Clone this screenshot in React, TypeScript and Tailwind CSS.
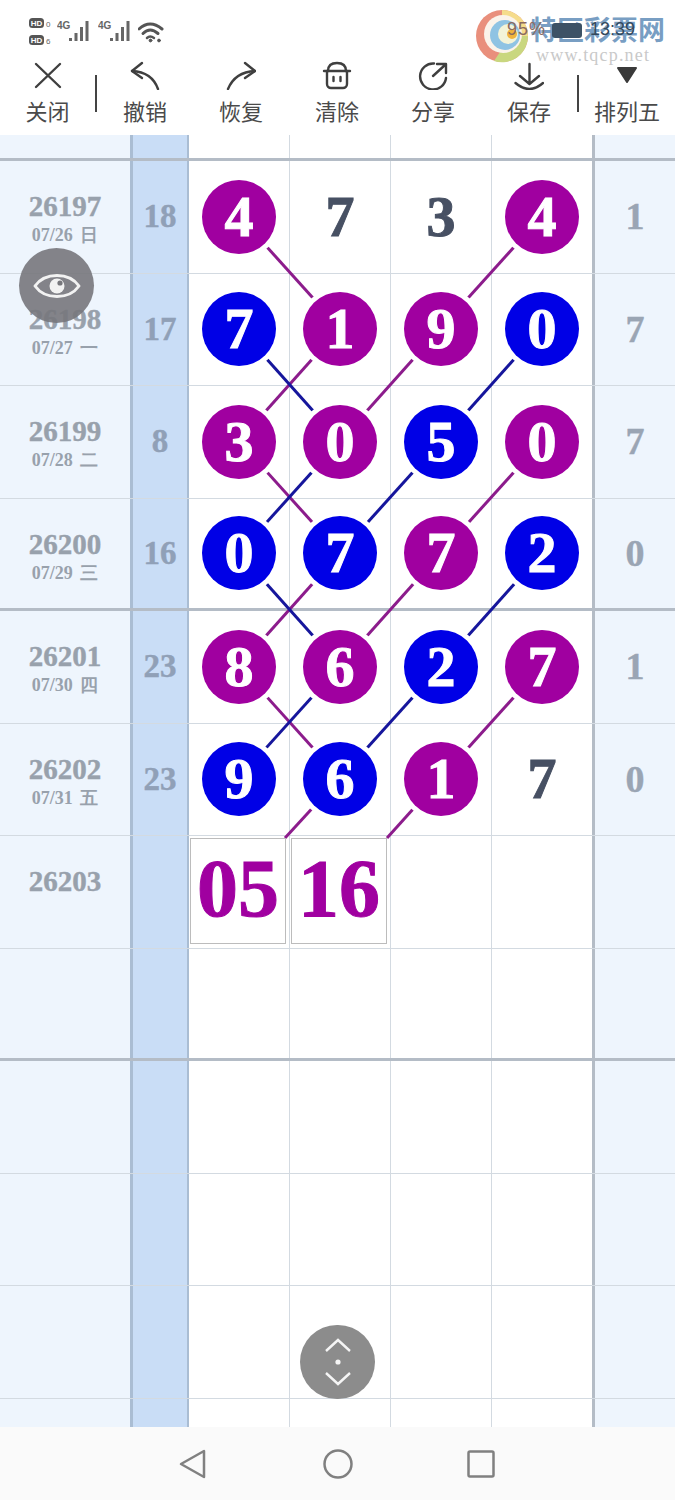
import React from "react";

type Cell = { v: string; k: "p" | "b" | "n" };

const p = (v: string): Cell => ({ v, k: "p" });
const b = (v: string): Cell => ({ v, k: "b" });
const n = (v: string): Cell => ({ v, k: "n" });

const rows = [
  { issue: "26197", date: "07/26 日", sum: "18", cells: [p("4"), n("7"), n("3"), p("4")], last: "1" },
  { issue: "26198", date: "07/27 一", sum: "17", cells: [b("7"), p("1"), p("9"), b("0")], last: "7" },
  { issue: "26199", date: "07/28 二", sum: "8", cells: [p("3"), p("0"), b("5"), p("0")], last: "7" },
  { issue: "26200", date: "07/29 三", sum: "16", cells: [b("0"), b("7"), p("7"), b("2")], last: "0", heavy: true },
  { issue: "26201", date: "07/30 四", sum: "23", cells: [p("8"), p("6"), b("2"), p("7")], last: "1" },
  { issue: "26202", date: "07/31 五", sum: "23", cells: [b("9"), b("6"), p("1"), n("7")], last: "0" },
];

const PURPLE = "#8c1c8c";
const BLUE = "#16169c";
const X = [239, 340, 441, 542];
const Y = [216, 328, 441, 553, 666, 778];

// [from row, from col, to row, to col, colour]
const links: [number, number, number, number, string][] = [
  [0, 0, 1, 1, PURPLE],
  [0, 3, 1, 2, PURPLE],
  [1, 1, 2, 0, PURPLE],
  [1, 2, 2, 1, PURPLE],
  [1, 0, 2, 1, BLUE],
  [1, 3, 2, 2, BLUE],
  [2, 0, 3, 1, PURPLE],
  [2, 3, 3, 2, PURPLE],
  [2, 1, 3, 0, BLUE],
  [2, 2, 3, 1, BLUE],
  [3, 1, 4, 0, PURPLE],
  [3, 2, 4, 1, PURPLE],
  [3, 0, 4, 1, BLUE],
  [3, 3, 4, 2, BLUE],
  [4, 0, 5, 1, PURPLE],
  [4, 3, 5, 2, PURPLE],
  [4, 1, 5, 0, BLUE],
  [4, 2, 5, 1, BLUE],
];

const serif = "font-['Liberation_Serif',serif] font-bold";
const gridCols = "grid grid-cols-[130px_59px_101px_101px_101px_100px_83px]";

const iconProps = {
  width: 30,
  height: 30,
  viewBox: "0 0 30 30",
  fill: "none",
  stroke: "#3f3f3f",
  strokeWidth: 2.4,
  strokeLinecap: "round" as const,
  strokeLinejoin: "round" as const,
};

const CloseIcon = () => (
  <svg {...iconProps}>
    <path d="M3 4 L27 27 M27 4 L3 27" />
  </svg>
);
const UndoIcon = () => (
  <svg {...iconProps}>
    <path d="M12 3 L2 11 L12 18" />
    <path d="M2 11 Q22 12 28 29" />
  </svg>
);
const RedoIcon = () => (
  <svg {...iconProps}>
    <path d="M19 3 L29 11 L19 18" />
    <path d="M29 11 Q9 12 2 29" />
  </svg>
);
const ClearIcon = () => (
  <svg {...iconProps}>
    <path d="M2 11 H28" />
    <path d="M6 11 C6 5 10 3 15 3 S24 5 24 11" />
    <path d="M5 11 V24 a4 4 0 0 0 4 4 H21 a4 4 0 0 0 4 -4 V11" />
    <path d="M11.5 17 V21 M18.5 17 V21" />
  </svg>
);
const ShareIcon = () => (
  <svg {...iconProps}>
    <path d="M16 3.5 A13 13 0 1 0 28 18" />
    <path d="M15 16 L27 5 M19 4 H28 V13" />
  </svg>
);
const SaveIcon = () => (
  <svg {...iconProps}>
    <path d="M15.5 4 V23 M6 16 L15.5 24 L25 16" />
    <path d="M1.5 23 Q15.5 35 29 23" />
  </svg>
);
const DropIcon = () => (
  <svg width={30} height={30} viewBox="0 0 30 30">
    <path d="M6 8 H24 L15 22 Z" fill="#3a3a3a" stroke="#3a3a3a" strokeWidth={2} strokeLinejoin="round" />
  </svg>
);

const Tool = ({ icon, label, width }: { icon: React.ReactNode; label: string; width: string }) => (
  <div className={`flex flex-col items-center ${width}`}>
    <div className="flex h-[40px] items-center justify-center">{icon}</div>
    <span className="text-[22px] leading-[30px] text-[#4a4a4a]">{label}</span>
  </div>
);

const HdChip = ({ y }: { y: number }) => (
  <g>
    <rect x={0} y={y} width={15} height={10} rx={3.5} fill="#555" />
    <text x={7.5} y={y + 8} fontSize={8} fontWeight={700} textAnchor="middle" fill="#fff" fontFamily="Liberation Sans">
      HD
    </text>
    <text x={17} y={y + 9} fontSize={8} fill="#666" fontFamily="Liberation Sans">
      {y === 0 ? "0" : "6"}
    </text>
  </g>
);

const Signal = ({ label }: { label: string }) => (
  <svg width={35} height={24} viewBox="0 0 35 24">
    <text x={0} y={11} fontSize={10} fontWeight={700} fill="#666" fontFamily="Liberation Sans">
      {label}
    </text>
    <rect x={12} y={20} width={3} height={3} fill="#666" />
    <rect x={17.5} y={15} width={3} height={8} fill="#666" />
    <rect x={23} y={9} width={3} height={14} fill="#666" />
    <rect x={28.5} y={3} width={3} height={20} fill="#666" />
  </svg>
);

const StatusBar = () => (
  <div className="flex h-[55px] items-start gap-[2px] pl-[29px] pt-[18px]">
    <svg width={26} height={28} viewBox="0 0 26 28">
      <HdChip y={0} />
      <HdChip y={17} />
    </svg>
    <Signal label="4G" />
    <div className="ml-[4px]">
      <Signal label="4G" />
    </div>
    <svg width={26} height={24} viewBox="0 0 26 24" fill="none" stroke="#555" strokeLinecap="round" className="ml-[3px] mt-[2px]">
      <path d="M1 9 Q12 -1 24 9" strokeWidth={3} />
      <path d="M5 13.5 Q12 6.5 20 13.5" strokeWidth={3} />
      <path d="M9 18 Q12 15 16 18" strokeWidth={2.5} />
      <circle cx={12.5} cy={20.5} r={1.4} fill="#555" />
      <circle cx={21} cy={20.5} r={1.4} fill="#555" />
    </svg>
  </div>
);

const Watermark = () => (
  <div className="absolute left-[474px] top-[8px] h-[56px] w-[201px]">
    <svg width={56} height={56} viewBox="0 0 56 56" className="absolute left-0 top-0">
      <circle cx={28} cy={28} r={26} fill="#e98f7c" />
      <path d="M28 2 A26 26 0 0 1 54 28 L42 28 A14 14 0 0 0 28 14 Z" fill="#f5dc8c" />
      <path d="M54 28 A26 26 0 0 1 20 53 L26 44 A16 16 0 0 0 44 28 Z" fill="#c9d77f" />
      <circle cx={29} cy={26} r={19} fill="#fbf3ea" />
      <circle cx={31} cy={27} r={15} fill="#8fc3e3" />
      <circle cx={34} cy={26} r={10} fill="#f3f3d8" />
      <circle cx={38} cy={26} r={5} fill="#f0b43c" />
    </svg>
    <span className="absolute left-[56px] top-[5px] whitespace-nowrap text-[27px] font-bold leading-[32px] text-[#5f8db8]/85">
      特区彩票网
    </span>
    <span className="absolute left-[62px] top-[37px] whitespace-nowrap text-[18px] font-['Liberation_Serif',serif] leading-[20px] tracking-[1.2px] text-[#c9c9c9]">
      www.tqcp.net
    </span>
    <span className="absolute left-[33px] top-[9px] text-[18px] leading-[24px] text-[#8a6a60] font-['Liberation_Sans',sans-serif] tracking-[1px]">
      95%
    </span>
    <div className="absolute left-[78px] top-[15px] h-[15px] w-[30px] rounded-[3px] bg-[#3d5266]" />
    <span className="absolute left-[116px] top-[9px] text-[18px] leading-[24px] text-[#35495c] font-['Liberation_Sans',sans-serif]">
      13:39
    </span>
  </div>
);

const Ball = ({ cell }: { cell: Cell }) => {
  if (cell.k === "n") {
    return (
      <span className={`${serif} relative z-10 text-[58px] leading-none text-[#475063] [-webkit-text-stroke:1px_#475063]`}>
        {cell.v}
      </span>
    );
  }
  return (
    <div
      className={`${serif} relative z-10 flex h-[74px] w-[74px] items-center justify-center rounded-full text-[58px] leading-none text-white [-webkit-text-stroke:1px_#ffffff] shadow-[0_0_0_5px_#ffffff] ${
        cell.k === "p" ? "bg-[#a000a0]" : "bg-[#0000e6]"
      }`}
    >
      {cell.v}
    </div>
  );
};

type RowProps = {
  issue?: string;
  date?: string;
  sum?: string;
  cells?: (React.ReactNode | null)[];
  last?: string;
  heavy?: boolean;
  height?: string;
};

const Row = ({ issue, date, sum, cells, last, heavy, height = "h-[112.5px]" }: RowProps) => {
  const line = heavy ? "border-b-[3px] border-b-[#b4bcc6]" : "border-b border-b-[#d3dae1]";
  return (
    <div className={`${gridCols} ${height} shrink-0 ${line}`}>
      <div className={`flex flex-col items-center bg-[#eef5fd] text-[#98a1ac] ${issue ? "pt-[30px]" : ""}`}>
        {issue && <span className={`${serif} text-[29px] leading-[30px] [-webkit-text-stroke:0.4px_#98a1ac]`}>{issue}</span>}
        {date && <span className={`${serif} text-[18px] leading-[28px] [word-spacing:3px]`}>{date}</span>}
      </div>
      <div className={`${serif} flex items-center justify-center border-x-[3px] border-r-[2px] border-x-[#aabdd3] bg-[#c9ddf6] text-[33px] text-[#90a0b7] [-webkit-text-stroke:0.4px_#90a0b7]`}>
        {sum}
      </div>
      {[0, 1, 2, 3].map((i) => (
        <div key={i} className={`flex items-center justify-center ${i < 3 ? "border-r border-r-[#d3dae1]" : ""}`}>
          {cells?.[i]}
        </div>
      ))}
      <div className={`${serif} flex items-center justify-center border-l-[3px] border-l-[#b4bcc6] bg-[#eef5fd] text-[38px] text-[#9aa5b4] [-webkit-text-stroke:0.4px_#9aa5b4]`}>
        {last}
      </div>
    </div>
  );
};

const Pending = ({ value }: { value: string }) => (
  <div className="relative z-10 mb-[4px] mr-[2px] flex h-[106px] w-[96px] items-center justify-center self-end border border-[#bcbcbc] bg-white pb-[3px]">
    <span className={`${serif} text-[82px] leading-none text-[#a000a0] [-webkit-text-stroke:1px_#a000a0]`}>{value}</span>
  </div>
);

const Table = () => (
  <div className="relative flex min-h-0 flex-1 flex-col overflow-hidden">
    <Row heavy height="h-[26px]" />
    {rows.map((r) => (
      <Row
        key={r.issue}
        issue={r.issue}
        date={r.date}
        sum={r.sum}
        last={r.last}
        heavy={r.heavy}
        cells={r.cells.map((c, i) => (
          <Ball key={i} cell={c} />
        ))}
      />
    ))}
    <Row issue="26203" cells={[<Pending key="a" value="05" />, <Pending key="b" value="16" />]} />
    <Row heavy />
    <Row />
    <Row />
    <Row />
    <Row />
    {/* connecting lines between the balls */}
    <svg className="pointer-events-none absolute inset-0 h-full w-full" viewBox="0 135 675 1292">
      {links.map(([r1, c1, r2, c2, color], i) => (
        <line key={i} x1={X[c1]} y1={Y[r1]} x2={X[c2]} y2={Y[r2]} stroke={color} strokeWidth={3} />
      ))}
      <line x1={340} y1={778} x2={285} y2={838} stroke={PURPLE} strokeWidth={3} />
      <line x1={441} y1={778} x2={387} y2={838} stroke={PURPLE} strokeWidth={3} />
    </svg>
  </div>
);

export default function App() {
  return (
    <div className="relative flex h-[1500px] w-[675px] flex-col overflow-hidden bg-white font-['Noto_Sans_CJK_SC','Noto_Sans',sans-serif]">
      <StatusBar />
      <div className="flex h-[80px] shrink-0 items-start">
        <Tool icon={<CloseIcon />} label="关闭" width="w-[95px]" />
        <div className="mt-[20px] h-[37px] w-[2px] bg-[#444]" />
        <Tool icon={<UndoIcon />} label="撤销" width="w-[96px]" />
        <Tool icon={<RedoIcon />} label="恢复" width="w-[96px]" />
        <Tool icon={<ClearIcon />} label="清除" width="w-[96px]" />
        <Tool icon={<ShareIcon />} label="分享" width="w-[96px]" />
        <Tool icon={<SaveIcon />} label="保存" width="w-[96px]" />
        <div className="mt-[20px] h-[37px] w-[2px] bg-[#444]" />
        <Tool icon={<DropIcon />} label="排列五" width="w-[96px]" />
      </div>
      <Table />
      <div className="flex h-[73px] shrink-0 items-center bg-[#fafafa]">
        <svg width={30} height={32} viewBox="0 0 30 32" className="ml-[178px]">
          <path d="M3 16 L26 3 V29 Z" fill="none" stroke="#808080" strokeWidth={2.5} strokeLinejoin="round" />
        </svg>
        <svg width={30} height={32} viewBox="0 0 30 32" className="ml-[115px]">
          <circle cx={15} cy={16} r={13.5} fill="none" stroke="#808080" strokeWidth={2.5} />
        </svg>
        <svg width={30} height={32} viewBox="0 0 30 32" className="ml-[113px]">
          <rect x={2.5} y={3.5} width={25} height={25} rx={1.5} fill="none" stroke="#808080" strokeWidth={2.5} />
        </svg>
      </div>
      <Watermark />
      {/* floating buttons */}
      <div className="absolute left-[19px] top-[248px] z-20 flex h-[75px] w-[75px] items-center justify-center rounded-full bg-[#77777c]/90">
        <svg width={48} height={34} viewBox="0 0 48 34" fill="none">
          <path d="M2 17 C12 3 36 3 46 17 C36 31 12 31 2 17 Z" stroke="#f2f2f2" strokeWidth={3} strokeLinejoin="round" />
          <circle cx={24} cy={17} r={7.5} fill="#f2f2f2" />
          <circle cx={27} cy={14} r={2.6} fill="#77777c" />
        </svg>
      </div>
      <div className="absolute left-[300px] top-[1325px] z-20 flex h-[74px] w-[75px] items-center justify-center rounded-full bg-[#8c8c8c]">
        <svg width={30} height={52} viewBox="0 0 30 52" fill="none" stroke="#f5f5f5" strokeWidth={2.4}>
          <path d="M3 15 L15 4 L27 15" />
          <circle cx={15} cy={26} r={2.6} fill="#f5f5f5" stroke="none" />
          <path d="M3 37 L15 48 L27 37" />
        </svg>
      </div>
    </div>
  );
}
